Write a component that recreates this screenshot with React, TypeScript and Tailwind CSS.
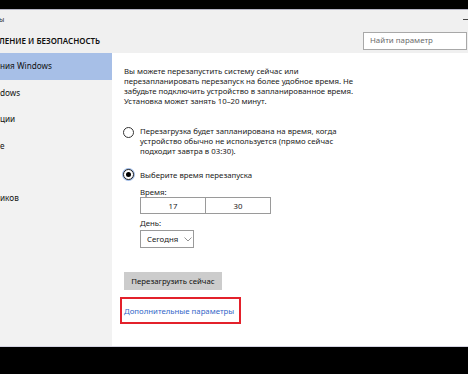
import React from "react";

const font = { fontFamily: '"Noto Sans", "Open Sans", sans-serif' };

export default function App() {
  return (
    <div className="w-[468px] h-[374px] bg-black flex flex-col overflow-hidden" style={font}>
      <div className="h-[9px] bg-black shrink-0" />
      <div className="h-px bg-[#b4b4c4] shrink-0" />
      {/* title bar */}
      <div className="h-[18px] shrink-0 bg-[#f0f0f0] flex items-center justify-between">
        <span className="text-[7px] leading-none text-[#333] -ml-[1px]">ы</span>
        <div className="w-[5px] h-px bg-[#444]" />
      </div>
      {/* header */}
      <div className="h-[25px] shrink-0 bg-[#f0f0f0] flex items-center justify-between">
        <span className="text-[8px] font-semibold leading-none text-[#111] whitespace-nowrap -ml-[1px]">
          ЛЕНИЕ И БЕЗОПАСНОСТЬ
        </span>
        <div className="w-[104px] h-[18px] mr-[1px] bg-white border border-[#a8a8a8] flex items-center pl-[6px]">
          <span className="text-[7.9px] leading-none text-[#6b6b6b]">Найти параметр</span>
        </div>
      </div>
      {/* body */}
      <div className="h-[293px] shrink-0 flex">
        <div className="w-[112px] bg-[#f2f2f2] flex flex-col text-[8.2px] text-[#111]">
          <div className="h-[27px] bg-[#a7bfe7] flex items-center whitespace-nowrap">ния Windows</div>
          <div className="h-[26px] flex items-center">dows</div>
          <div className="h-[27px] flex items-center">ции</div>
          <div className="h-[26px] flex items-center">е</div>
          <div className="h-[26px] flex items-center"></div>
          <div className="h-[26px] flex items-center">иков</div>
        </div>
        <div className="flex-1 bg-white pl-[12px] pt-[13px] flex flex-col items-start text-[7.8px] leading-[10px] text-[#1a1a1a] whitespace-nowrap">
          <p>
            Вы можете перезапустить систему сейчас или
            <br />
            перезапланировать перезапуск на более удобное время. Не
            <br />
            забудьте подключить устройство в запланированное время.
            <br />
            Установка может занять 10–20 минут.
          </p>
          <div className="mt-[20px] flex items-start">
            <div className="w-[11px] h-[11px] mt-[1px] -ml-[1px] rounded-full border border-[#333] bg-white" />
            <p className="ml-[6px]">
              Перезагрузка будет запланирована на время, когда
              <br />
              устройство обычно не используется (прямо сейчас
              <br />
              подходит завтра в 03:30).
            </p>
          </div>
          <div className="mt-[13px] flex items-center">
            <div className="w-[11px] h-[11px] -ml-[1px] rounded-full border border-[#222] ring-1 ring-[#9fbbe6] bg-white flex items-center justify-center">
              <div className="w-[5px] h-[5px] rounded-full bg-black" />
            </div>
            <span className="ml-[6px]">Выберите время перезапуска</span>
          </div>
          <div className="ml-[16px] flex flex-col items-start">
            <span className="mt-[7px]">Время:</span>
            <div className="w-[131px] h-[17px] border border-[#9a9a9a] flex">
              <div className="w-[65px] border-r border-[#9a9a9a] flex items-center justify-center">17</div>
              <div className="flex-1 flex items-center justify-center">30</div>
            </div>
            <span className="mt-[4px]">День:</span>
            <div className="mt-[2px] w-[54px] h-[18px] border border-[#9a9a9a] flex items-center pl-[6px] gap-[6px]">
              <span>Сегодня</span>
              <svg width="8" height="5" viewBox="0 0 8 5" fill="none">
                <path d="M0.5 0.5 L4 4 L7.5 0.5" stroke="#777" strokeWidth="0.8" />
              </svg>
            </div>
          </div>
          <div className="mt-[24px] w-[98px] h-[18px] bg-[#cccccc] flex items-center justify-center text-[#111]">
            Перезагрузить сейчас
          </div>
          <div className="mt-[7px] -ml-[4px] w-[121px] h-[27px] border-2 border-[#e3212b] flex items-center pl-[2px]">
            <span className="text-[#3466c8]">Дополнительные параметры</span>
          </div>
        </div>
      </div>
      <div className="h-px bg-[#d4d4e2] shrink-0" />
      <div className="flex-1 bg-black" />
    </div>
  );
}
